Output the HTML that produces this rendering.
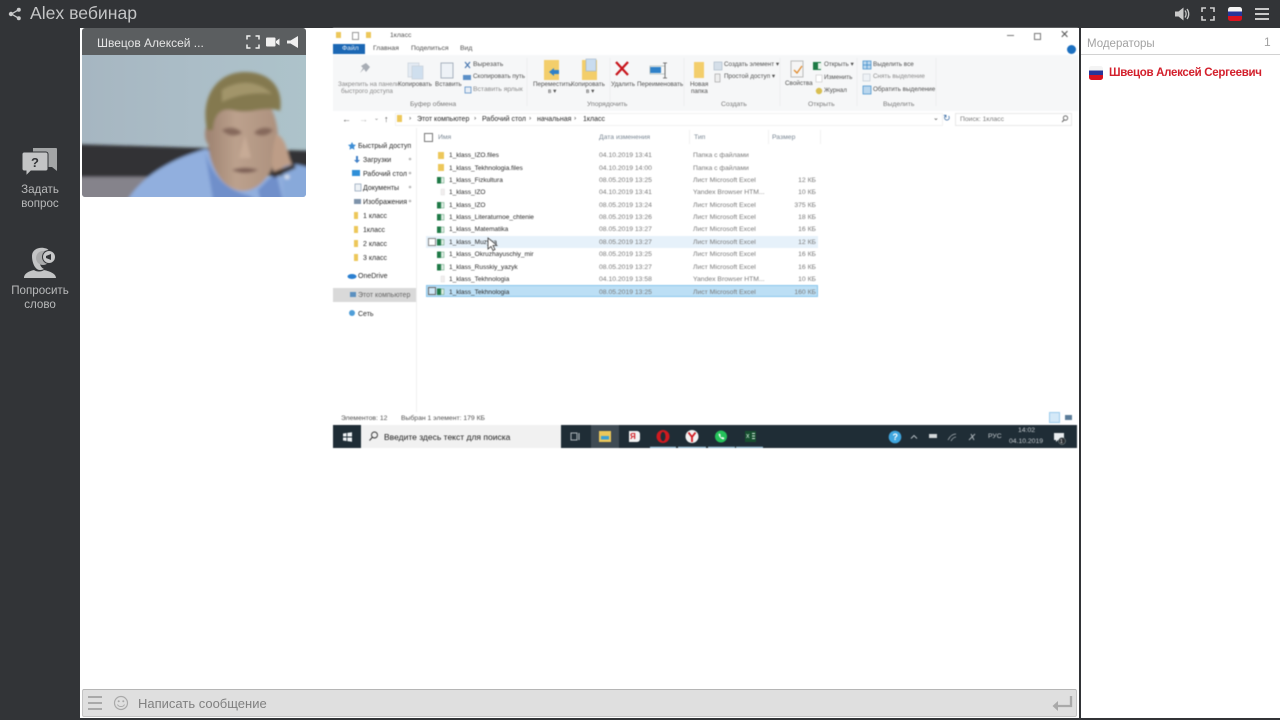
<!DOCTYPE html>
<html lang="ru">
<head>
<meta charset="utf-8">
<title>Alex вебинар</title>
<style>
html,body{margin:0;padding:0;width:1280px;height:720px;overflow:hidden;background:#323437;font-family:"Liberation Sans","Noto Sans CJK JP",sans-serif}
.a{position:absolute}
.t{position:absolute;white-space:nowrap;line-height:12px;height:12px}
#blur{position:absolute;left:333px;top:28px;width:745px;height:420px;filter:blur(.4px);overflow:hidden;background:#fff}
#blur .t{font-size:6.8px;color:#505050;margin-left:-333px;margin-top:-28px}
#blur .a,#blur svg{margin-left:-333px;margin-top:-28px}
#blur .n{color:#2a2a2a;font-size:7px;margin-top:-27.3px}
#blur .l{font-size:6.5px}
#blur .g{color:#7a7a7a;margin-top:-27.3px}
#blur .s{width:60px;text-align:right}
</style>
</head>
<body>
<!-- top bar -->
<svg class="a" style="left:8px;top:7px" width="14" height="14" viewBox="0 0 14 14"><path d="M10.500 2.800 3.500 7l7 4.200" stroke="#c8c9ca" stroke-width="1.300" fill="none"/><circle cx="10.800" cy="2.800" r="2" fill="#c8c9ca"/><circle cx="3" cy="7" r="2.200" fill="#c8c9ca"/><circle cx="10.800" cy="11.200" r="2" fill="#c8c9ca"/></svg>
<div class="t" style="left:30px;top:2px;height:22px;line-height:22px;font-size:17.600px;color:#c4c5c6">Alex вебинар</div>

<svg class="a" style="left:1174px;top:6px" width="16" height="16" viewBox="0 0 16 16"><path d="M1 5.500h3.500L9.500 1.500v13L4.500 10.500H1z" fill="#c9c9c9"/><path d="M11 4.500c1.500 2 1.500 5 0 7M13 3c2.300 3 2.300 7 0 10" stroke="#c9c9c9" stroke-width="1.300" fill="none"/></svg>
<svg class="a" style="left:1201px;top:7px" width="14" height="14" viewBox="0 0 14 14"><path d="M1 5V1h4M9 1h4v4M13 9v4H9M5 13H1V9" stroke="#d0d0d0" stroke-width="1.600" fill="none"/></svg>
<div class="a" style="left:1228px;top:7px;width:14px;height:14px;border-radius:2.500px;overflow:hidden;background:linear-gradient(#f4f4f4 0 33%,#27359a 33% 66%,#d9121f 66%)"></div>
<div class="a" style="left:1255px;top:8px;width:14px;height:2px;background:#c9c9c9"></div>
<div class="a" style="left:1255px;top:13px;width:14px;height:2px;background:#c9c9c9"></div>
<div class="a" style="left:1255px;top:18px;width:14px;height:2px;background:#c9c9c9"></div>

<!-- left sidebar -->
<svg class="a" style="left:22px;top:147px" width="36" height="30" viewBox="0 0 36 30"><path d="M11 1h23c.6 0 1 .4 1 1v22l-5-4H11z" fill="#a3a5a6"/><path d="M2 5h22c1 0 2 1 2 2v15c0 1-1 2-2 2H9l-5 5v-5H2c-1 0-2-1-2-2V7c0-1 1-2 2-2z" fill="#c3c4c5" stroke="#323437" stroke-width="1"/><text x="13" y="20" font-family="Liberation Sans" font-size="13" font-weight="bold" text-anchor="middle" fill="#323437">?</text></svg>
<div class="t" style="left:0;width:80px;top:183px;height:14px;line-height:14px;text-align:center;font-size:11.600px;color:#b9babb">Задать</div>
<div class="t" style="left:0;width:80px;top:197px;height:14px;line-height:14px;text-align:center;font-size:11.600px;color:#b9babb">вопрос</div>
<svg class="a" style="left:22px;top:246px" width="36" height="34" viewBox="0 0 36 34"><path d="M2 32c0-5 6-7 10-8 2 2 8 2 10 0 4 1 12 3 12 8z" fill="#c3c4c5"/><path d="M10 10c0-6 6-9 12-8 3 .5 4 1 5 3-5-1-9 1-9 5v7c0 3 2 5 4 6-4 2-7 1-9-2-2-3-3-7-3-11z" fill="#c3c4c5"/><circle cx="21" cy="12" r="7" fill="#a9aaab"/><circle cx="27" cy="11" r="6.500" fill="#c8c9ca" stroke="#323437" stroke-width="1"/><path d="M24 10l5-2v6l-5-2z" fill="#323437"/></svg>
<div class="t" style="left:0;width:80px;top:284px;height:14px;line-height:14px;text-align:center;font-size:11.600px;color:#b9babb">Попросить</div>
<div class="t" style="left:0;width:80px;top:298px;height:14px;line-height:14px;text-align:center;font-size:11.600px;color:#b9babb">слово</div>

<!-- centre -->
<div class="a" style="left:80px;top:28px;width:999px;height:690px;background:#fff"></div>
<!-- right panel -->
<div class="a" style="left:1081px;top:28px;width:199px;height:690px;background:#fff"></div>
<div class="a" style="left:1081px;top:54px;width:199px;height:1px;background:#d2d2d2"></div>
<div class="t" style="left:1087px;top:36px;height:14px;line-height:14px;font-size:11.500px;color:#a2a2a2;transform:translateY(1px)">Модераторы</div>
<div class="t" style="left:1264px;top:35px;height:14px;line-height:14px;font-size:12px;color:#a2a2a2">1</div>
<div class="a" style="left:1089px;top:66px;width:14px;height:14px;border-radius:2.500px;overflow:hidden;background:linear-gradient(#f4f4f4 0 33%,#27359a 33% 66%,#d9121f 66%)"></div>
<div class="t" style="left:1109px;top:66px;height:14px;line-height:14px;font-size:11.500px;font-weight:bold;letter-spacing:-.3px;color:#d3202c">Швецов Алексей Сергеевич</div>

<!-- video -->
<svg class="a" style="left:82px;top:55px;border-radius:0 0 3px 3px" width="224" height="142" viewBox="82 55 224 142">
<defs>
<linearGradient id="wall" x1="0" x2="1" y1="0" y2="0"><stop offset="0" stop-color="#a6b6c1"/><stop offset=".5" stop-color="#abbdc7"/><stop offset="1" stop-color="#adc3ca"/></linearGradient>
<linearGradient id="skin" x1="0" x2="1" y1="0" y2="0"><stop offset="0" stop-color="#9f8472"/><stop offset=".4" stop-color="#bca18d"/><stop offset="1" stop-color="#ad917e"/></linearGradient>
<filter id="b1" x="-10%" y="-10%" width="120%" height="120%"><feGaussianBlur stdDeviation="1.500"/></filter>
</defs>
<rect x="82" y="55" width="224" height="142" fill="url(#wall)"/>
<g filter="url(#b1)">
<path d="M70 144 L205 148 L320 151 V175 L150 178 H70z" fill="#313134"/>
<rect x="70" y="177" width="80" height="30" fill="#85838b"/>
<path d="M125 205 C134 185 160 162 206 149 L262 178 L292 175 L320 180 V205z" fill="#91afde"/>
<path d="M205 152 C212 176 226 190 250 196 L262 205 H214z" fill="#6f8fca"/>
<path d="M258 190 L276 172 L284 205 H262z" fill="#6f8fca"/>
<ellipse cx="210" cy="134" rx="5" ry="11" fill="#a08472"/>
<ellipse cx="243" cy="139" rx="35" ry="52" fill="url(#skin)"/>
<path d="M276 134 C288 138 287 158 293 166 L276 176 C270 170 272 150 276 134z" fill="#bd9d87"/>
<path d="M282 168 C292 162 300 164 320 172 V205 H284z" fill="#88a9da"/>
<path d="M270 173 L294 164 L296 168 L274 178z" fill="#38322f"/>
<ellipse cx="287" cy="177" rx="2.500" ry="2" fill="#e2e8ef"/>
<path d="M207 130 C200 98 216 72 245 72 C270 72 284 88 280 111 C266 105 250 115 232 110 C222 108 214 113 213 130Z" fill="#84794f"/>
<path d="M222 90 C238 80 258 80 272 94 C256 92 238 94 222 102z" fill="#a2956a"/>
<path d="M222 130 C228 126 238 127 242 133 C236 137 228 137 222 130zM254 133 C258 127 268 126 273 130 C268 137 259 137 254 133z" fill="#86695b"/>
<path d="M232 170 C240 167 250 167 258 170 C250 174 240 174 232 170z" fill="#7d5e54"/>
<path d="M245 135 L239 158 L251 158z" fill="#c7ab96"/>
</g>
</svg>
<div class="a" style="left:82px;top:28px;width:224px;height:27px;background:#5b5e60;border-radius:3px 3px 0 0"></div>
<div class="t" style="left:97px;top:36px;height:14px;line-height:14px;font-size:12px;color:#e6e6e6">Швецов Алексей ...</div>
<svg class="a" style="left:246px;top:35px" width="14" height="14" viewBox="0 0 14 14"><path d="M1 4.500V1h3.500M9.500 1H13v3.500M13 9.500V13H9.500M4.500 13H1V9.500" stroke="#f0f0f0" stroke-width="1.500" fill="none"/></svg>
<svg class="a" style="left:266px;top:37px" width="14" height="10" viewBox="0 0 14 10"><rect x="0" y="0.500" width="9.500" height="9" rx="1" fill="#f0f0f0"/><path d="M10 4l3.500-2.500v7L10 6z" fill="#f0f0f0"/></svg>
<svg class="a" style="left:287px;top:36px" width="12" height="12" viewBox="0 0 12 12"><path d="M0 4.500h3.500L11 0v12L3.500 7.500H0z" fill="#f0f0f0"/></svg>

<!-- screen share -->
<div id="blur">
 <!-- title bar -->
 <div class="a" style="left:336px;top:32px;width:5px;height:6px;background:#edc75a"></div>
 <div class="a" style="left:352px;top:32px;width:5px;height:6px;border:1px solid #999;background:#fff"></div>
 <div class="a" style="left:366px;top:32px;width:5px;height:6px;background:#edc75a"></div>
 <div class="t" style="left:390px;top:30px">1класс</div>
 <div class="a" style="left:1007px;top:35px;width:7px;height:1px;background:#777"></div>
 <div class="a" style="left:1034px;top:33px;width:5px;height:5px;border:1px solid #777"></div>
 <div class="t" style="left:1060px;top:29px;font-size:11px;color:#555">✕</div>
 <!-- tabs -->
 <div class="a" style="left:333px;top:44px;width:32px;height:10px;background:#1b67b4"></div>
 <div class="t" style="left:342px;top:43px;color:#e6eef8">Файл</div>
 <div class="t" style="left:373px;top:43px">Главная</div>
 <div class="t" style="left:411px;top:43px">Поделиться</div>
 <div class="t" style="left:460px;top:43px">Вид</div>
 <div class="a" style="left:1067px;top:45px;width:9px;height:9px;border-radius:50%;background:#1b6fc0"></div>
 <div class="a" style="left:333px;top:55px;width:745px;height:56px;background:#f6f7f8"></div>
 <!-- ribbon -->
 <svg class="a" style="left:333px;top:55px" width="745" height="56" viewBox="333 55 745 56">
  <path d="M366 63l4 4-4 5-2-3-4 4 3-5-2-2z" fill="#a8adb5"/>
  <rect x="408" y="63" width="11" height="14" fill="#e4ebf3" stroke="#c8d0da" stroke-width=".7"/><rect x="412" y="66" width="11" height="13" fill="#cfdfee" stroke="#c8d0da" stroke-width=".7"/>
  <rect x="441" y="63" width="12" height="15" fill="#eef2f7" stroke="#a8b2be"/>
  <path d="M465 62l5 6M470 62l-5 6" stroke="#4a78b0" stroke-width="1.200"/>
  <rect x="463" y="75" width="8" height="5" fill="#5b8fc7"/>
  <rect x="465" y="87" width="6" height="6" fill="#e8eef5" stroke="#5b8fc7" stroke-width=".8"/>
  <path d="M544 60h15v20h-15z" fill="#f3ce6b"/><path d="M549 72l5-4v2h5v4h-5v2z" fill="#2f81c9"/>
  <path d="M582 60h15v20h-15z" fill="#f3ce6b"/><rect x="586" y="59" width="10" height="12" fill="#c9dcef" stroke="#9fb4c9" stroke-width=".6"/>
  <path d="M616 62l12 13M628 62l-12 13" stroke="#c8161d" stroke-width="2.300"/>
  <rect x="650" y="67" width="11" height="6" fill="#2f81c9"/><rect x="650" y="66" width="15" height="8" fill="none" stroke="#9aa" stroke-width=".6"/><path d="M665 63v15M663 63h4M663 78h4" stroke="#555" stroke-width=".8"/>
  <path d="M694 62h10v16h-10z" fill="#f3ce6b"/>
  <rect x="714" y="62" width="8" height="8" fill="#d5dfe9" stroke="#9ab" stroke-width=".5"/>
  <rect x="715" y="74" width="5" height="8" fill="#eee" stroke="#888" stroke-width=".5"/>
  <rect x="791" y="61" width="12" height="16" fill="#f5f5f5" stroke="#bbb"/><path d="M794 70l3 3 5-7" stroke="#e08a2d" stroke-width="1.300" fill="none"/>
  <rect x="813" y="62" width="8" height="8" fill="#1d7b45"/><rect x="818" y="63" width="4" height="6" fill="#e9f3ec"/>
  <rect x="816" y="75" width="6" height="7" fill="#fff" stroke="#bbb" stroke-width=".5"/>
  <circle cx="819" cy="91" r="3.200" fill="#d9bf52"/>
  <rect x="863" y="61" width="8" height="8" fill="#b9d7ee" stroke="#3d8ac9" stroke-width=".7"/><path d="M867 61v8M863 65h8" stroke="#3d8ac9" stroke-width=".7"/>
  <rect x="863" y="74" width="7" height="7" fill="#eef2f6" stroke="#c5ccd5" stroke-width=".7"/>
  <rect x="863" y="86" width="8" height="8" fill="#b9d7ee" stroke="#3d8ac9" stroke-width=".7"/>
  <path d="M527 58v48M610 58v48M684 58v48M780 58v48M857 58v48M936 58v48" stroke="#eaebed" stroke-width=".8"/>
 </svg>
 <div class="t" style="left:338px;top:79px;font-size:6.300px;color:#8a8a8a">Закрепить на панели</div>
 <div class="t" style="left:341px;top:86px;font-size:6.300px;color:#8a8a8a">быстрого доступа</div>
 <div class="t" style="left:398px;top:79px;font-size:6.300px">Копировать</div>
 <div class="t" style="left:435px;top:79px;font-size:6.300px">Вставить</div>
 <div class="t" style="left:473px;top:59px">Вырезать</div>
 <div class="t" style="left:473px;top:71px;font-size:6.300px">Скопировать путь</div>
 <div class="t" style="left:473px;top:84px;color:#8a8a8a">Вставить ярлык</div>
 <div class="t g" style="left:410px;top:98px">Буфер обмена</div>
 <div class="t" style="left:533px;top:79px;font-size:6.300px">Переместить</div>
 <div class="t" style="left:548px;top:86px;font-size:6.300px">в ▾</div>
 <div class="t" style="left:571px;top:79px;font-size:6.300px">Копировать</div>
 <div class="t" style="left:586px;top:86px;font-size:6.300px">в ▾</div>
 <div class="t" style="left:611px;top:79px;font-size:6.300px">Удалить</div>
 <div class="t" style="left:637px;top:79px;font-size:6.300px">Переименовать</div>
 <div class="t g" style="left:587px;top:98px">Упорядочить</div>
 <div class="t" style="left:690px;top:79px;font-size:6.300px">Новая</div>
 <div class="t" style="left:691px;top:86px;font-size:6.300px">папка</div>
 <div class="t g" style="left:721px;top:98px">Создать</div>
 <div class="t" style="left:724px;top:59px;font-size:6.300px">Создать элемент ▾</div>
 <div class="t" style="left:724px;top:71px;font-size:6.300px">Простой доступ ▾</div>
 <div class="t" style="left:785px;top:78px;font-size:6.300px">Свойства</div>
 <div class="t" style="left:824px;top:59px;font-size:6.300px">Открыть ▾</div>
 <div class="t" style="left:824px;top:72px;font-size:6.300px">Изменить</div>
 <div class="t" style="left:824px;top:85px;font-size:6.300px">Журнал</div>
 <div class="t g" style="left:808px;top:98px">Открыть</div>
 <div class="t" style="left:873px;top:59px;font-size:6.300px">Выделить все</div>
 <div class="t" style="left:873px;top:71px;font-size:6.300px;color:#8a8a8a">Снять выделение</div>
 <div class="t" style="left:873px;top:84px;font-size:6.300px">Обратить выделение</div>
 <div class="t g" style="left:883px;top:98px">Выделить</div>
 <!-- address -->
 <div class="a" style="left:395px;top:113px;width:546px;height:11px;border:1px solid #f2f2f2"></div>
 <div class="a" style="left:955px;top:113px;width:115px;height:11px;border:1px solid #e8e8e8"></div>
 <div class="t" style="left:342px;top:113px;color:#555;font-size:9px">←</div>
 <div class="t" style="left:359px;top:113px;font-size:9px;color:#bbb">→</div>
 <div class="t" style="left:374px;top:113px;font-size:6px;color:#888">⌄</div>
 <div class="t" style="left:384px;top:113px;font-size:9px">↑</div>
 <div class="a" style="left:397px;top:115px;width:5px;height:7px;background:#edc75a"></div>
 <div class="t" style="left:409px;top:113px;color:#444">›</div>
 <div class="t n" style="left:417px;top:113px">Этот компьютер</div>
 <div class="t" style="left:474px;top:113px;color:#444">›</div>
 <div class="t n" style="left:482px;top:113px">Рабочий стол</div>
 <div class="t" style="left:529px;top:113px;color:#444">›</div>
 <div class="t n" style="left:537px;top:113px">начальная</div>
 <div class="t" style="left:574px;top:113px;color:#444">›</div>
 <div class="t n" style="left:583px;top:113px">1класс</div>
 <div class="t" style="left:933px;top:113px">⌄</div>
 <div class="t" style="left:943px;top:112px;font-size:9px;color:#3d6ea5">↻</div>
 <div class="t g" style="left:960px;top:113px">Поиск: 1класс</div>
 <svg class="a" style="left:1061px;top:115px" width="8" height="8" viewBox="0 0 8 8"><circle cx="4.500" cy="3" r="2.200" fill="none" stroke="#555" stroke-width=".8"/><path d="M3 5 1 7" stroke="#555" stroke-width=".9"/></svg>
 <!-- columns -->
 <div class="a" style="left:424px;top:133px;width:7px;height:7px;border:1px solid #777"></div>
 <div class="t" style="left:438px;top:132px;color:#7a8794">Имя</div>
 <div class="t" style="left:599px;top:132px;color:#7a8794">Дата изменения</div>
 <div class="t" style="left:694px;top:132px;color:#7a8794">Тип</div>
 <div class="t" style="left:772px;top:132px;color:#7a8794">Размер</div>
 <div class="a" style="left:689px;top:130px;width:1px;height:14px;background:#f1f1f1"></div>
 <div class="a" style="left:768px;top:130px;width:1px;height:14px;background:#f1f1f1"></div>
 <div class="a" style="left:820px;top:130px;width:1px;height:14px;background:#f1f1f1"></div>
 <div class="a" style="left:416px;top:128px;width:1px;height:284px;background:#efefef"></div>
 <!-- nav pane -->
 <div class="a" style="left:333px;top:288px;width:83px;height:14px;background:#d9d9d9"></div>
 <svg class="a" style="left:333px;top:128px" width="84" height="195" viewBox="333 128 84 195">
  <path d="M352 142l1.300 2.500 2.700.4-2 2 .5 2.800-2.500-1.300-2.500 1.300.5-2.800-2-2 2.700-.4z" fill="#3f8fd6"/>
  <path d="M356 156v4h-2l3 3 3-3h-2v-4z" fill="#3f7fc6"/>
  <rect x="352" y="170" width="8" height="6" fill="#2f8fd8"/>
  <rect x="355" y="184" width="6" height="7" fill="#eef2f6" stroke="#8b9fb5" stroke-width=".7"/>
  <rect x="354" y="199" width="7" height="5" fill="#7e93ab"/>
  <g fill="#edc75a"><rect x="354" y="212" width="4" height="7"/><rect x="354" y="226" width="4" height="7"/><rect x="354" y="240" width="4" height="7"/><rect x="354" y="254" width="4" height="7"/></g>
  <ellipse cx="352" cy="276.500" rx="4.500" ry="2.500" fill="#2a7fd0"/>
  <rect x="350" y="292" width="6" height="5" fill="#5b90c0"/>
  <circle cx="352" cy="313" r="3" fill="#4f9ed8"/>
  <g fill="#bbb"><circle cx="410" cy="159" r="1.300"/><circle cx="410" cy="173" r="1.300"/><circle cx="410" cy="187" r="1.300"/><circle cx="410" cy="201" r="1.300"/></g>
 </svg>
 <div class="t n" style="left:358px;top:140px">Быстрый доступ</div>
 <div class="t n" style="left:363px;top:154px">Загрузки</div>
 <div class="t n" style="left:363px;top:168px">Рабочий стол</div>
 <div class="t n" style="left:363px;top:182px">Документы</div>
 <div class="t n" style="left:363px;top:196px">Изображения</div>
 <div class="t n" style="left:363px;top:210px">1 класс</div>
 <div class="t n" style="left:363px;top:224px">1класс</div>
 <div class="t n" style="left:363px;top:238px">2 класс</div>
 <div class="t n" style="left:363px;top:252px">3 класс</div>
 <div class="t n" style="left:358px;top:270px">OneDrive</div>
 <div class="t n" style="left:358px;top:289px;color:#666">Этот компьютер</div>
 <div class="t n" style="left:358px;top:308px">Сеть</div>
 <!-- rows hover/selection -->
 <div class="a" style="left:426px;top:236px;width:392px;height:12px;background:#e6f1fa"></div>
 <div class="a" style="left:426px;top:285px;width:392px;height:12px;background:#bcdff5;border:1px solid #8ac6ec;box-sizing:border-box"></div>
 <div class="a" style="left:428px;top:238px;width:6px;height:6px;border:1px solid #888;background:#fff"></div>
 <div class="a" style="left:428px;top:287px;width:6px;height:6px;border:1px solid #666;background:#cfe7f7"></div>
 <svg class="a" style="left:425px;top:150px" width="80" height="150" viewBox="425 150 80 150">
  <g fill="#edc75a"><rect x="438" y="152" width="6" height="7"/><rect x="438" y="164" width="6" height="7"/></g>
  <g fill="#1f7a47"><rect x="437" y="177" width="4" height="6.500"/><rect x="437" y="202" width="4" height="6.500"/><rect x="437" y="214" width="4" height="6.500"/><rect x="437" y="226.500" width="4" height="6.500"/><rect x="437" y="239" width="4" height="6.500"/><rect x="437" y="251.500" width="4" height="6.500"/><rect x="437" y="264" width="4" height="6.500"/><rect x="437" y="288.500" width="4" height="6.500"/></g>
  <g fill="#dfeee4" stroke="#5a9b74" stroke-width=".5"><rect x="441" y="177.500" width="3" height="5.500"/><rect x="441" y="202.500" width="3" height="5.500"/><rect x="441" y="214.500" width="3" height="5.500"/><rect x="441" y="227" width="3" height="5.500"/><rect x="441" y="239.500" width="3" height="5.500"/><rect x="441" y="252" width="3" height="5.500"/><rect x="441" y="264.500" width="3" height="5.500"/><rect x="441" y="289" width="3" height="5.500"/></g>
  <rect x="441" y="189" width="3.500" height="6" fill="#f1eeee" stroke="#ddd" stroke-width=".4"/>
  <rect x="441" y="276" width="3.500" height="6" fill="#f1eeee" stroke="#ddd" stroke-width=".4"/>
 </svg>
 <div class="t n l" style="left:449px;top:149.500px">1_klass_IZO.files</div>
 <div class="t g" style="left:599px;top:149.500px">04.10.2019 13:41</div>
 <div class="t g" style="left:693px;top:149.500px">Папка с файлами</div>

 <div class="t n l" style="left:449px;top:162px">1_klass_Tekhnologia.files</div>
 <div class="t g" style="left:599px;top:162px">04.10.2019 14:00</div>
 <div class="t g" style="left:693px;top:162px">Папка с файлами</div>

 <div class="t n l" style="left:449px;top:174px">1_klass_Fizkultura</div>
 <div class="t g" style="left:599px;top:174px">08.05.2019 13:25</div>
 <div class="t g" style="left:693px;top:174px">Лист Microsoft Excel</div>
 <div class="t g s" style="left:756px;top:174px">12 КБ</div>

 <div class="t n l" style="left:449px;top:186.500px">1_klass_IZO</div>
 <div class="t g" style="left:599px;top:186.500px">04.10.2019 13:41</div>
 <div class="t g" style="left:693px;top:186.500px">Yandex Browser HTM...</div>
 <div class="t g s" style="left:756px;top:186.500px">10 КБ</div>

 <div class="t n l" style="left:449px;top:199px">1_klass_IZO</div>
 <div class="t g" style="left:599px;top:199px">08.05.2019 13:24</div>
 <div class="t g" style="left:693px;top:199px">Лист Microsoft Excel</div>
 <div class="t g s" style="left:756px;top:199px">375 КБ</div>

 <div class="t n l" style="left:449px;top:211px">1_klass_Literaturnoe_chtenie</div>
 <div class="t g" style="left:599px;top:211px">08.05.2019 13:26</div>
 <div class="t g" style="left:693px;top:211px">Лист Microsoft Excel</div>
 <div class="t g s" style="left:756px;top:211px">18 КБ</div>

 <div class="t n l" style="left:449px;top:223.500px">1_klass_Matematika</div>
 <div class="t g" style="left:599px;top:223.500px">08.05.2019 13:27</div>
 <div class="t g" style="left:693px;top:223.500px">Лист Microsoft Excel</div>
 <div class="t g s" style="left:756px;top:223.500px">16 КБ</div>

 <div class="t n l" style="left:449px;top:236px">1_klass_Muzyka</div>
 <div class="t g" style="left:599px;top:236px">08.05.2019 13:27</div>
 <div class="t g" style="left:693px;top:236px">Лист Microsoft Excel</div>
 <div class="t g s" style="left:756px;top:236px">12 КБ</div>

 <div class="t n l" style="left:449px;top:248.500px">1_klass_Okruzhayuschiy_mir</div>
 <div class="t g" style="left:599px;top:248.500px">08.05.2019 13:25</div>
 <div class="t g" style="left:693px;top:248.500px">Лист Microsoft Excel</div>
 <div class="t g s" style="left:756px;top:248.500px">16 КБ</div>

 <div class="t n l" style="left:449px;top:261px">1_klass_Russkiy_yazyk</div>
 <div class="t g" style="left:599px;top:261px">08.05.2019 13:27</div>
 <div class="t g" style="left:693px;top:261px">Лист Microsoft Excel</div>
 <div class="t g s" style="left:756px;top:261px">16 КБ</div>

 <div class="t n l" style="left:449px;top:273.500px">1_klass_Tekhnologia</div>
 <div class="t g" style="left:599px;top:273.500px">04.10.2019 13:58</div>
 <div class="t g" style="left:693px;top:273.500px">Yandex Browser HTM...</div>
 <div class="t g s" style="left:756px;top:273.500px">10 КБ</div>

 <div class="t n l" style="left:449px;top:286px">1_klass_Tekhnologia</div>
 <div class="t g" style="left:599px;top:286px">08.05.2019 13:25</div>
 <div class="t g" style="left:693px;top:286px">Лист Microsoft Excel</div>
 <div class="t g s" style="left:756px;top:286px">160 КБ</div>

 <!-- cursor -->
 <svg class="a" style="left:487px;top:237px" width="11" height="15" viewBox="0 0 11 15"><path d="M1 1v11l3-2.500 2 4 2-1-2-4h4z" fill="#fff" stroke="#333" stroke-width=".8"/></svg>
 <!-- status -->
 <div class="t" style="left:341px;top:413px">Элементов: 12</div>
 <div class="t" style="left:401px;top:413px">Выбран 1 элемент: 179 КБ</div>
 <div class="a" style="left:1049px;top:412px;width:11px;height:11px;background:#d4e9f8;border:1px solid #9ccbec;box-sizing:border-box"></div>
 <div class="a" style="left:1065px;top:415px;width:7px;height:5px;background:#5b7c99"></div>
 <!-- taskbar -->
 <div class="a" style="left:333px;top:425px;width:744px;height:23px;background:#1f2d36"></div>
 <div class="a" style="left:361px;top:425px;width:200px;height:23px;background:#f1f1f1"></div>
 <div class="a" style="left:591px;top:425px;width:28px;height:23px;background:#3f4b54"></div>
 <svg class="a" style="left:333px;top:425px" width="745" height="23" viewBox="333 425 745 23">
  <path d="M343 433.500l3.500-.5v3.500h-3.500zM347.300 432.900l4.700-.7v4.300h-4.700zM343 437.500h3.500v3.500l-3.500-.5zM347.300 437.500h4.700v4.300l-4.700-.7z" fill="#eef2f5"/>
  <circle cx="374.500" cy="435" r="3" fill="none" stroke="#333" stroke-width=".9"/><path d="M372.300 437.300 369.500 440.500" stroke="#333" stroke-width="1"/>
  <rect x="571" y="433" width="6" height="7" fill="none" stroke="#bcc4c9" stroke-width=".9"/><path d="M579 433v7" stroke="#bcc4c9" stroke-width="1"/>
  <path d="M599 431h12v11h-12z" fill="#edc75a"/><rect x="601" y="436" width="8" height="3.500" fill="#3aa0d8"/>
  <path d="M629 431h8a3 3 0 0 1 3 3v5a3 3 0 0 1-3 3h-8z" fill="#f4f4f4"/>
  <circle cx="663" cy="436.500" r="6.500" fill="#d11a20"/><ellipse cx="663" cy="436.500" rx="2.500" ry="4.600" fill="#1f2d36"/>
  <circle cx="692" cy="436.500" r="6.500" fill="#f2f2f2"/><path d="M688.500 432.500l3.500 4.500 3.500-4.500M692 437v5" stroke="#d11a20" stroke-width="1.800" fill="none"/>
  <circle cx="721" cy="436.500" r="6" fill="#25c25a"/><path d="M718.500 434c.5 3 2 4.500 5 5.500l1-1.500-2-1-1 .6-1.300-1.500.6-1-1-1.500z" fill="#fff"/>
  <rect x="745" y="431" width="11" height="11" fill="#174f30"/><path d="M752 433.500h3M752 436h3M752 438.500h3" stroke="#d8eee0" stroke-width="1"/>
  <path d="M650 447.300h26M678 447.300h28M708 447.300h27M736 447.300h27" stroke="#a9d4ee" stroke-width="1.200"/>
  <circle cx="895" cy="437" r="6.300" fill="#3fa6df"/>
  <path d="M911 438.500l3-3 3 3" stroke="#bcc4c9" stroke-width=".9" fill="none"/>
  <rect x="929" y="434" width="8" height="4" fill="#d3d8da"/>
  <path d="M948 440c2-4 5-6 8-6M951 441c1-2 3-4 5-4" stroke="#aab2b7" stroke-width=".8" fill="none"/>
  <path d="M969 440l6-6M971 434l3 6" stroke="#aab2b7" stroke-width="1"/>
  <path d="M1054 433h10v7h-6l-2 2v-2h-2z" fill="#e9edef"/>
  <circle cx="1062" cy="441" r="3.500" fill="#2a2f33" stroke="#9aa" stroke-width=".5"/>
 </svg>
 <div class="t" style="left:384px;top:431px;font-size:8.500px;color:#222">Введите здесь текст для поиска</div>
 <div class="t" style="left:630px;top:431px;font-size:8px;font-weight:bold;color:#d11a20">Я</div>
 <div class="t" style="left:746px;top:431px;font-size:7px;color:#d8eee0">x</div>
 <div class="t" style="left:892.500px;top:431px;font-size:9px;font-weight:bold;color:#fff">?</div>
 <div class="t" style="left:988px;top:431px;color:#c6ccd0">РУС</div>
 <div class="t" style="left:1018px;top:425px;color:#c6ccd0">14:02</div>
 <div class="t" style="left:1009px;top:436px;color:#c6ccd0">04.10.2019</div>
 <div class="t" style="left:1060px;top:436px;font-size:5px;color:#fff">1</div>
</div>

<!-- message bar -->
<div class="a" style="left:82px;top:689px;width:995px;height:28px;background:#dfdfdf;border:1px solid #c4c4c4;border-top:1px solid #b5b5b5;box-sizing:border-box;border-radius:2px"></div>
<div class="a" style="left:88px;top:696px;width:14px;height:2px;background:#a9a9a9"></div>
<div class="a" style="left:88px;top:702px;width:14px;height:2px;background:#a9a9a9"></div>
<div class="a" style="left:88px;top:708px;width:14px;height:2px;background:#a9a9a9"></div>
<svg class="a" style="left:113px;top:695px" width="16" height="16" viewBox="0 0 16 16"><circle cx="8" cy="8" r="6.500" fill="none" stroke="#a9a9a9" stroke-width="1.200"/><circle cx="5.700" cy="6.300" r="1" fill="#a9a9a9"/><circle cx="10.300" cy="6.300" r="1" fill="#a9a9a9"/><path d="M4.500 9.500c1 2.700 6 2.700 7 0" stroke="#a9a9a9" stroke-width="1" fill="none"/></svg>
<div class="t" style="left:138px;top:696px;height:15px;line-height:15px;font-size:13px;color:#808080">Написать сообщение</div>
<svg class="a" style="left:1051px;top:695px" width="22" height="17" viewBox="0 0 22 17"><path d="M20 1v10H5" stroke="#a9a9a9" stroke-width="2.300" fill="none"/><path d="M7 6 1.500 11 7 16z" fill="#a9a9a9"/></svg>
</body>
</html>
